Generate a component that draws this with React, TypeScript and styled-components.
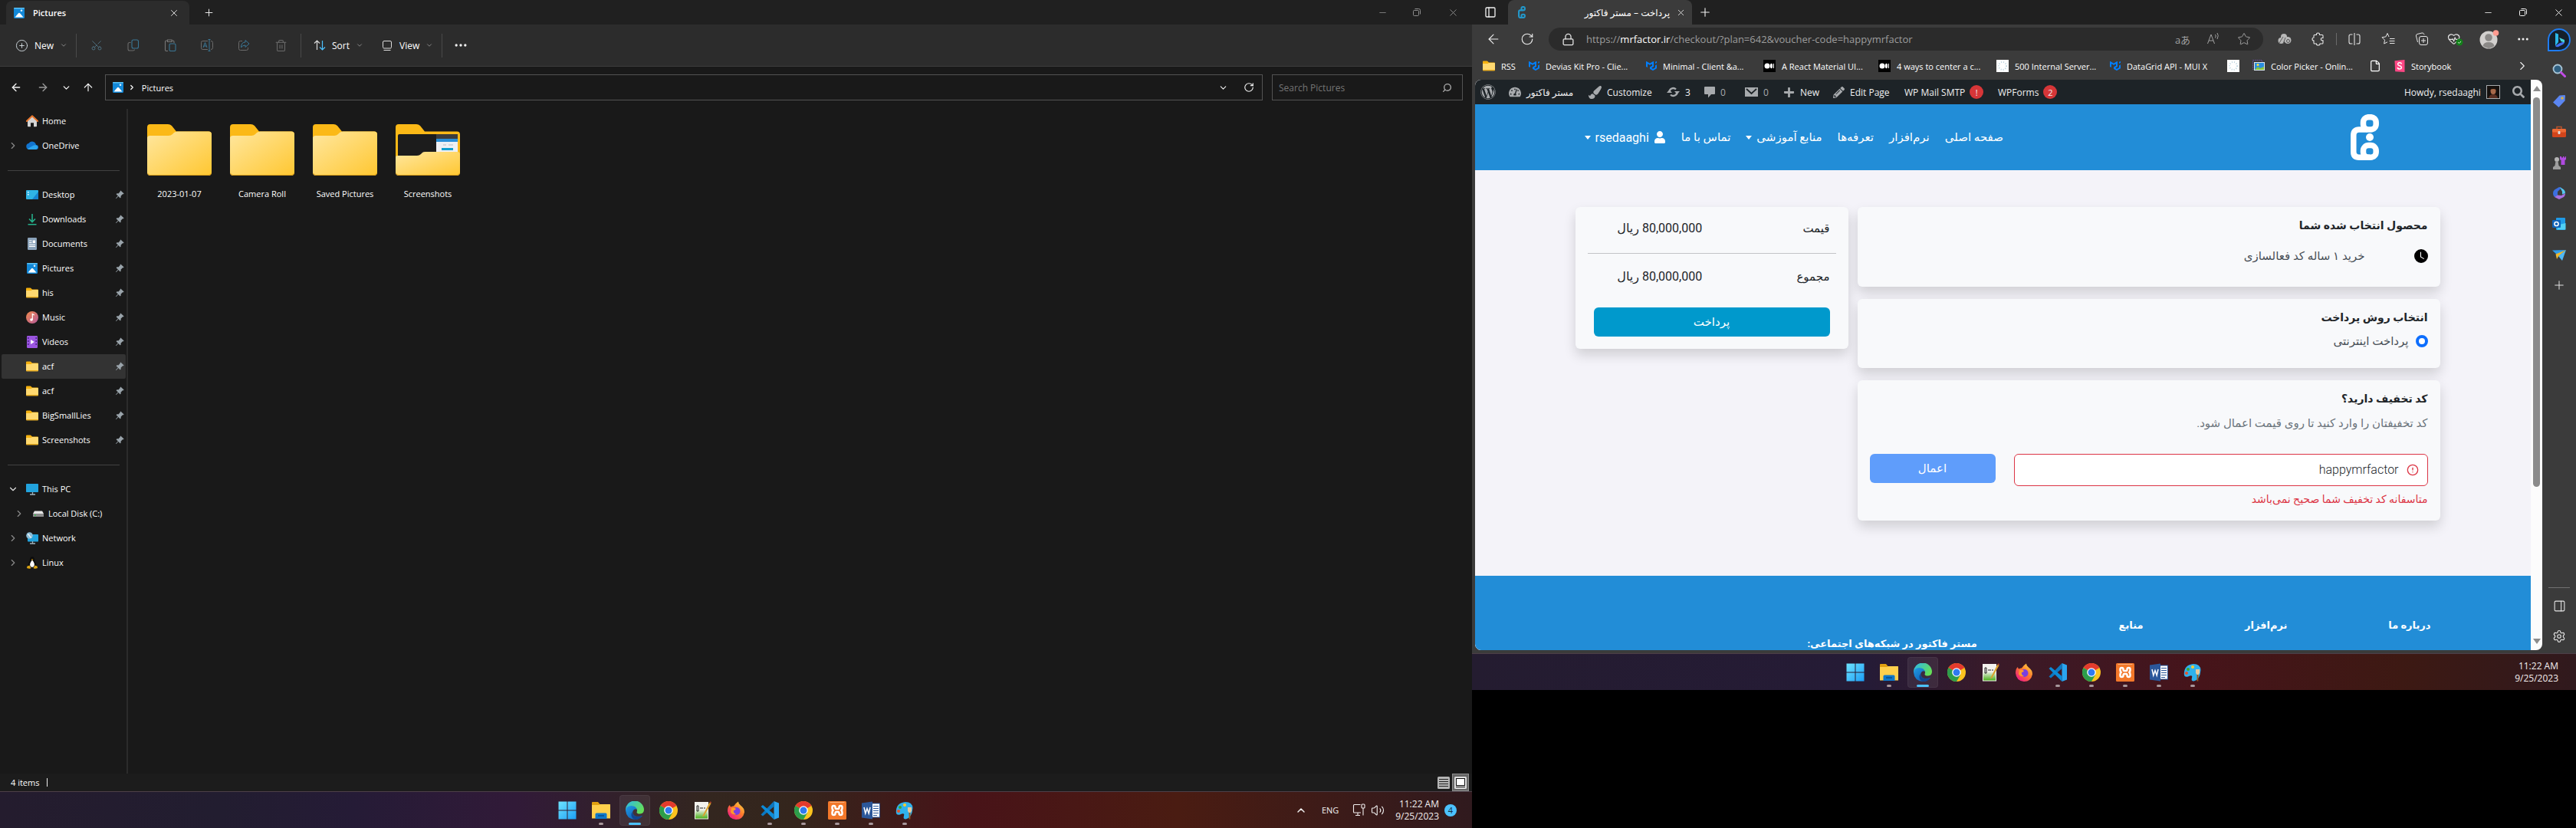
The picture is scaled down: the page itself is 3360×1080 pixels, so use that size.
import React from 'react';
import styled, { createGlobalStyle, css } from 'styled-components';
import {
  ArrowLeft, ArrowRight, ArrowUp, ChevronDown, ChevronRight, ChevronUp, Ellipsis, File,
  Minus, PanelRight, Plus, RotateCw, Scissors, Search, Settings, Star, Trash2, Volume2, X, Lock,
  CircleAlert, HeartPulse, PanelLeft, CirclePlus,
} from 'lucide-react';
import { BsPinAngleFill, BsClockFill } from 'react-icons/bs';
import { FaWordpress, FaPaintBrush, FaTachometerAlt, FaPlus, FaPencilAlt, FaUser, FaSearch } from 'react-icons/fa';
import { SiMui } from 'react-icons/si';

const uiFont = '"Open Sans", "Noto Sans", "DejaVu Sans", "Noto Sans CJK JP", sans-serif';
const siteFont = 'Roboto, "DejaVu Sans", sans-serif';

const GlobalStyle = createGlobalStyle`
  *, *::before, *::after { box-sizing: border-box; }
  body { margin: 0; background: #000; font-family: ${uiFont}; font-size: 11px; color: #fff; }
  button, input { font: inherit; color: inherit; }
  button { background: none; border: 0; padding: 0; margin: 0; }
  a { color: inherit; text-decoration: none; }
  ul { list-style: none; margin: 0; padding: 0; }
  h2, h3, p { margin: 0; }
  svg { flex: none; display: block; }
`;

/* ---------- artwork ---------- */

const PicturesIcon = ({ size = 16 }: { size?: number }) => (
  <svg width={size} height={size} viewBox="0 0 16 16">
    <rect x="1" y="1" width="14" height="14" rx="1.5" fill="#1288d8" />
    <rect x="1" y="1" width="14" height="1.5" rx=".7" fill="#5cc3f5" />
    <path d="M2.5 13.5 7 8.2q1-1 2 0l4.500 5.300z" fill="#fff" />
    <circle cx="11" cy="4.800" r="1.300" fill="#d8f1ff" />
  </svg>
);

const SmallFolder = ({ size = 16 }: { size?: number }) => (
  <svg width={size} height={size} viewBox="0 0 16 16">
    <path d="M0 2.500q0-1 1-1h4.500q.6 0 1 .5L8 3.500h7q1 0 1 1V8H0z" fill="#f5b10f" />
    <path d="M0 5h6.500l1.500-1h7q1 0 1 1v8.500q0 .8-.8.8H.8q-.8 0-.8-.8z" fill="#ffd970" />
    <path d="M0 13h16v.5q0 .8-.8.8H.8q-.8 0-.8-.8z" fill="#e8a917" />
  </svg>
);

const HomeIcon = () => (
  <svg width="16" height="16" viewBox="0 0 16 16">
    <path d="M2 7 8 1.500 14 7v7.500q0 .8-.8.8H10v-5H6v5H2.800q-.8 0-.8-.8z" fill="#d4d4d4" />
    <path d="M.8 8 8 1.200 15.200 8" fill="none" stroke="#e8762c" strokeWidth="2" strokeLinecap="round" strokeLinejoin="round" />
  </svg>
);

const OneDriveIcon = () => (
  <svg width="16" height="16" viewBox="0 0 16 16">
    <path d="M4 13a4 4 0 0 1-.6-7.900A5.200 5.200 0 0 1 13 7a3 3 0 0 1 0 6z" fill="#1274cf" />
    <path d="M2 12 10 7.500q3-1 4.500.8A3 3 0 0 1 13 13H4q-1.200 0-2-1z" fill="#2ba5ee" />
  </svg>
);

const DesktopIcon = () => (
  <svg width="16" height="16" viewBox="0 0 16 16">
    <rect x="0" y="2" width="16" height="12" rx="1" fill="#2fb3e4" />
    <path d="M8 14 16 4v9q0 1-1 1z" fill="#1583cf" />
    <path d="M2 4h1.500v1.500H2zM2 7h1.500v1.500H2z" fill="#fff" />
  </svg>
);

const DownloadIcon = () => (
  <svg width="16" height="16" viewBox="0 0 16 16" fill="none" stroke="#25b08b" strokeWidth="1.600">
    <path d="M8 1v10M4 7.500 8 11.500l4-4M2.500 14.700h11" />
  </svg>
);

const DocumentIcon = () => (
  <svg width="16" height="16" viewBox="0 0 16 16">
    <rect x="2" y="0" width="12" height="16" rx="1.200" fill="#8ba3ba" />
    <path d="M4 4h3.500M4 6.500h3.500M4 9h8M4 11.300h8" stroke="#fff" strokeWidth="1.200" />
    <rect x="8.700" y="3.500" width="3.300" height="3.500" fill="#fff" />
  </svg>
);

const MusicIcon = () => (
  <svg width="16" height="16" viewBox="0 0 16 16">
    <defs>
      <linearGradient id="music" x1="0" y1="0" x2="1" y2="1"><stop stopColor="#f08a4c" /><stop offset="1" stopColor="#b65a9b" /></linearGradient>
    </defs>
    <circle cx="8" cy="8" r="8" fill="url(#music)" />
    <circle cx="7" cy="11" r="1.800" fill="#fff" />
    <path d="M8.300 11V3.500l2.500 1.500" fill="none" stroke="#fff" strokeWidth="1.200" />
  </svg>
);

const VideoIcon = () => (
  <svg width="16" height="16" viewBox="0 0 16 16">
    <rect x="1" y="0" width="14" height="16" rx="1.200" fill="#9b55e0" />
    <path d="M2.800 2v12M13.200 2v12" stroke="#4a2384" strokeWidth="1.500" strokeDasharray="2 2" />
    <path d="M6 5v6l4.800-3z" fill="#fff" />
  </svg>
);

const ComputerIcon = ({ globe }: { globe?: boolean }) => (
  <svg width="16" height="16" viewBox="0 0 16 16">
    <rect x={globe ? 2 : 0} y={globe ? 3 : 1} width={globe ? 14 : 16} height={globe ? 9.500 : 11} rx=".8" fill="#22a3dd" />
    <path d="M8.500 12v2.500M5 15h7" stroke="#9fb2bd" strokeWidth="1.300" />
    {globe && <circle cx="4.500" cy="4.500" r="4.300" fill="#8cbcd6" />}
    {globe && <path d="M2 3q2 0 2.500 2T7 7" stroke="#e8f5fb" strokeWidth="1.300" fill="none" />}
  </svg>
);

const DiskIcon = () => (
  <svg width="16" height="16" viewBox="0 0 16 16">
    <path d="M3 4.500h10L15 8H1z" fill="#e6e6e6" />
    <rect x="1" y="8" width="14" height="4" rx=".6" fill="#8d8d8d" />
    <circle cx="4" cy="10" r=".9" fill="#2fc04a" />
  </svg>
);

const LinuxIcon = () => (
  <svg width="16" height="16" viewBox="0 0 16 16">
    <path d="M8 .2q3 0 3 3.500 0 2 1.800 5 1.200 3 0 5.300H3.200q-1.200-2.300 0-5.300Q5 5.700 5 3.700 5 .2 8 .2z" fill="#0c0c0c" />
    <path d="M8 4.500q2 2 2.800 5 .5 4-2.800 4.300-3.300-.3-2.800-4.300Q6 6.500 8 4.500z" fill="#fff" />
    <path d="M1.500 12.500 4.500 11.500l2 3.500q-1.500 1.300-5.500 0zM14.500 12.500 11.500 11.500l-2 3.500q1.500 1.300 5.500 0zM6.700 3.800 8 3.200l1.300.6L8 5z" fill="#dba413" />
  </svg>
);

const BigFolder = ({ preview }: { preview?: boolean }) => (
  <svg width="84" height="67" viewBox="0 0 84 67">
    <defs>
      <linearGradient id="folder" x1="0" y1="0" x2="1" y2="1"><stop stopColor="#ffe79f" /><stop offset="1" stopColor="#ffc731" /></linearGradient>
    </defs>
    <path d="M0 4q0-4 4-4h23q3 0 5 2l6 7.500h42q4 0 4 4V60H0z" fill="#fbb917" />
    {preview && (
      <g>
        <rect x="3" y="13" width="78" height="32" rx="2" fill="#1c1c1c" />
        <rect x="53" y="13" width="28" height="6" fill="#3c3c3c" />
        <rect x="53" y="19" width="28" height="5" fill="#2a8fd8" />
        <rect x="53" y="23" width="28" height="22" fill="#eef0f4" />
        <path d="M62 27h4M69 27h6" stroke="#b9bcc4" />
        <rect x="60" y="31" width="15" height="3" fill="#11a0cf" />
      </g>
    )}
    {preview
      ? <path d="M0 43q0-2 3-2h25q3 0 5-2l2-2q1-1 4-1h41q4 0 4 3v24q0 4-4 4H4q-4 0-4-4z" fill="url(#folder)" />
      : <path d="M0 18q0-3 4-3h24q3 0 5-2l2-2q2-1.500 4-1.500h41q4 0 4 4V63q0 4-4 4H4q-4 0-4-4z" fill="url(#folder)" />}
    <path d="M.5 64q1 2.500 3.500 2.500h76q2.500 0 3.500-2.500" fill="none" stroke="#d99c17" />
  </svg>
);

const CopyIcon = () => (
  <svg width="16" height="16" viewBox="0 0 16 16" fill="none" strokeWidth="1.100">
    <path d="M4.500 4.500H3q-2 0-2 2v6.500q0 2 2 2h4.500q2 0 2-1.500" stroke="#6b6b6b" />
    <rect x="6" y="1" width="8.500" height="11" rx="2" stroke="#3a7796" />
  </svg>
);

const PasteIcon = () => (
  <svg width="16" height="16" viewBox="0 0 16 16" fill="none" strokeWidth="1.100">
    <path d="M5 15.500H3q-1.500 0-1.500-1.500V3.500Q1.500 2 3 2h1.500M10 2h1.500Q13 2 13 3.500V5M4.500 1h5.500v2.500H4.500z" stroke="#777" />
    <rect x="7" y="6" width="8" height="9.500" rx="1.500" stroke="#3a7796" />
  </svg>
);

const RenameIcon = () => (
  <svg width="16" height="16" viewBox="0 0 16 16" fill="none" stroke="#6b6b6b">
    <path d="M9 2.500H2.500q-2 0-2 2v7q0 2 2 2H9M13 2.500q2.500 0 2.500 2v7q0 2-2.500 2" />
    <path d="M3 11l2.500-6.500L8 11M4 9h3.200M11 .5v15M9.500.5h3M9.500 15.500h3" stroke="#3a7796" />
  </svg>
);

const ShareIcon = () => (
  <svg width="16" height="16" viewBox="0 0 16 16" fill="none" stroke="#6b6b6b">
    <path d="M6 2.500H3.500q-2 0-2 2v8q0 2 2 2h8q2 0 2-2V11" />
    <path d="M10 1.500 15 6l-5 4.500V8q-4 0-5.500 3Q4.500 4 10 4z" stroke="#3a7796" />
  </svg>
);

const SortIcon = () => (
  <svg width="16" height="16" viewBox="0 0 16 16" fill="none">
    <path d="M4.500 14V2M1 5.500 4.500 2 8 5.500" stroke="#dcdcdc" strokeWidth="1.200" />
    <path d="M11.500 2v12M8 10.500l3.500 3.500 3.500-3.500" stroke="#4cc2ff" strokeWidth="1.200" />
  </svg>
);

const ViewIcon = () => (
  <svg width="16" height="16" viewBox="0 0 16 16" fill="none" stroke="#dcdcdc">
    <rect x="2.500" y="2.500" width="11" height="9.500" rx="1.500" />
    <path d="M3.500 14.500h9" />
  </svg>
);

const RestoreIcon = () => (
  <svg width="12" height="12" viewBox="0 0 12 12" fill="none" stroke="currentColor">
    <rect x="1.500" y="3.500" width="7" height="7" rx="1" />
    <path d="M3.500 1.500h5q2 0 2 2v5" />
  </svg>
);

const WiredNetworkIcon = () => (
  <svg width="17" height="17" viewBox="0 0 17 17" fill="none" stroke="#f2eeee" strokeWidth="1.100">
    <path d="M10.500 1.500H2.500q-1 0-1 1v8.500q0 1 1 1h8.500M4 15.500h6M7 12v3.500M14 6v9.500" />
    <rect x="12" y="1" width="4" height="5" rx="1" />
  </svg>
);

const WindowsLogo = () => (
  <svg width="24" height="24" viewBox="0 0 24 24">
    <defs>
      <linearGradient id="win" x1="0" y1="0" x2="1" y2="1"><stop stopColor="#6fe4ff" /><stop offset="1" stopColor="#1b9df5" /></linearGradient>
    </defs>
    <path d="M.5.500h11v11H.5zM12.500.500h11v11h-11zM.5 12.500h11v11H.5zM12.500 12.500h11v11h-11z" fill="url(#win)" />
  </svg>
);

const ExplorerLogo = () => (
  <svg width="24" height="24" viewBox="0 0 24 24">
    <path d="M0 2q0-1 1-1h7l2.500 3H23q1 0 1 1v3H0z" fill="#e0a010" />
    <path d="M0 5h9l2-1h12q1 0 1 1v17.500H0z" fill="#ffd04c" />
    <path d="M4.500 23v-6q0-1.500 1.500-1.500h12q1.500 0 1.500 1.500v6z" fill="#0f78c8" />
    <path d="M8 19h8" stroke="#084d8c" strokeWidth="1.500" />
  </svg>
);

const EdgeLogo = () => (
  <svg width="24" height="24" viewBox="0 0 24 24">
    <defs>
      <linearGradient id="edgeTop" x1="0" y1="0" x2="1" y2=".6"><stop stopColor="#2bb7ef" /><stop offset="1" stopColor="#65e056" /></linearGradient>
      <linearGradient id="edgeSide" x1="0" y1="0" x2="1" y2="1"><stop stopColor="#1f9be6" /><stop offset="1" stopColor="#0c4fa8" /></linearGradient>
    </defs>
    <path d="M0 12A12 12 0 0 1 24 11q0 5-5 5.500-4 .3-4.500-2 2-5-3.500-6.500T0 12z" fill="url(#edgeTop)" />
    <path d="M0 12q1-6 7.500-6 6 .2 7.500 5-3-2-5 1t1 6.500q4 3 11 .2Q18.500 24 12 24 1 23 0 12z" fill="url(#edgeSide)" />
    <path d="M9 14q0 5 5 6t8-1.300Q18.500 24 12 24q-5-2-4.500-7 .5-2 1.500-3z" fill="#12458f" />
  </svg>
);

const ChromeLogo = () => (
  <svg width="24" height="24" viewBox="0 0 24 24">
    <circle cx="12" cy="12" r="12" fill="#fcc31e" />
    <path d="M12 12 1.600 6A12 12 0 0 1 22.400 6z" fill="#e33b2e" />
    <path d="M1.600 6 12 12l0 12A12 12 0 0 1 1.600 6z" fill="#2c9e4b" />
    <path d="M12 24l5.200-9L12 12l-5.200 3z" fill="#2c9e4b" />
    <circle cx="12" cy="12" r="5.800" fill="#fff" />
    <circle cx="12" cy="12" r="4.500" fill="#2f7af0" />
  </svg>
);

const NotepadLogo = () => (
  <svg width="24" height="24" viewBox="0 0 24 24">
    <defs>
      <linearGradient id="npp" x1="0" y1="0" x2="0" y2="1"><stop offset=".4" stopColor="#f3f3ee" /><stop offset="1" stopColor="#4bb01c" /></linearGradient>
    </defs>
    <rect x="2" y="1" width="18" height="22.500" fill="#f3f3ee" />
    <path d="M3 3h16v19.500H3z" fill="url(#npp)" />
    <path d="M5 6v7h2V6zM9 9h4M14 9h2" stroke="#222" fill="none" />
    <path d="M21.500 1.500 13 18l-1 2.500 2.500-1.500L23.500 3z" fill="#dba12c" />
    <path d="m21.500 1.500 1-1.200 1.500 1-.5 1.700z" fill="#a33a2a" />
  </svg>
);

const FirefoxLogo = () => (
  <svg width="24" height="24" viewBox="0 0 24 24">
    <defs>
      <linearGradient id="fox" x1="1" y1="0" x2=".2" y2="1"><stop stopColor="#ffe94a" /><stop offset=".5" stopColor="#ff7a2c" /><stop offset="1" stopColor="#f0148c" /></linearGradient>
    </defs>
    <path d="M1 13q0-6 3-8 0 2 1.500 2.500Q8 6 9 6.500 11 3 15 .5q0 3 3 5 5 3.500 5 9Q21 24 12 24 2 23 1 13z" fill="url(#fox)" />
    <circle cx="12.500" cy="13" r="5" fill="#7a3fe0" />
    <path d="M6 9q4-1 6 1-1 2-3 2-1 3 3 5-5 1-7-3z" fill="#ff9a2a" />
  </svg>
);

const CodeLogo = () => (
  <svg width="24" height="24" viewBox="0 0 24 24">
    <path d="M17.500 0 24 2.500v19L17.500 24z" fill="#2aa5ef" />
    <path d="M17.500 0v7L3 19.500.5 17.500z" fill="#0b78c2" />
    <path d="M17.500 24v-7L3 5 .5 7z" fill="#0c8bd8" />
  </svg>
);

const XamppLogo = () => (
  <svg width="24" height="24" viewBox="0 0 24 24" fill="none" strokeLinecap="round" strokeLinejoin="round">
    <rect width="24" height="24" rx="1.500" fill="#f3782a" />
    <path d="M3 1.500h18" stroke="#f9b07c" />
    <path d="M7.500 8v1.500q0 1 1 1.500l1 1-1 1q-1 .5-1 1.500V16M16.500 8v1.500q0 1-1 1.500l-1 1 1 1q1 .5 1 1.500V16M8 12h8" stroke="#fff" strokeWidth="6.500" />
    <path d="M7.500 8v1q0 1.500 2 3-2 1.500-2 3v1M16.500 8v1q0 1.500-2 3 2 1.500 2 3v1M10 12h4" stroke="#f3782a" strokeWidth="1.600" />
  </svg>
);

const WordLogo = () => (
  <svg width="24" height="24" viewBox="0 0 24 24">
    <rect x="11" y="3" width="12.500" height="18" fill="#fff" stroke="#2b579a" />
    <path d="M15 6.500h7M15 9.500h7M15 12.500h7M15 15.500h7M15 18.500h5" stroke="#2b579a" />
    <path d="M0 2.500 14 .5v23L0 21.500z" fill="#2b579a" />
    <path d="m3 8 1.800 8L7 9.500 9.200 16 11 8" fill="none" stroke="#fff" strokeWidth="1.500" />
  </svg>
);

const PaintLogo = () => (
  <svg width="24" height="24" viewBox="0 0 24 24">
    <path d="M13 1q9 0 9.500 8-1 13-9 14.500-4 0-2.500-4.500T6 17.500Q1 19 .8 14 1 2 13 1z" fill="#2fb1ec" />
    <circle cx="6" cy="8" r="2" fill="#3fa52f" /><circle cx="12" cy="5" r="2" fill="#ffcc2e" /><circle cx="4" cy="13" r="2" fill="#e8532a" />
    <path d="M16 8h5v5l-1.500 2h-2L16 13z" fill="#e8c89a" />
    <path d="M17.500 15h2l-.2 8.500h-1.600z" fill="#9a5b1e" />
  </svg>
);

const SiteLogo = () => (
  <svg width="37" height="60" viewBox="0 0 37 60" fill="none" stroke="#fff" strokeWidth="7.500">
    <rect x="16.500" y="3.700" width="16.700" height="16.300" rx="7" />
    <path d="M22 20H11q-7.200 0-7.200 7.500V49q0 7.200 7.200 7.200h14" />
    <rect x="16.500" y="40.500" width="16.700" height="15.700" rx="7" />
    <circle cx="25" cy="30" r="5" fill="#fff" stroke="none" />
  </svg>
);

const SiteFavicon = () => (
  <svg width="10" height="16" viewBox="0 0 37 60" fill="none" stroke="#2397c9" strokeWidth="8">
    <rect x="16.500" y="3.700" width="16.700" height="16.300" rx="7" />
    <path d="M22 20H11q-7.200 0-7.200 7.500V49q0 7.200 7.200 7.200h14" />
    <rect x="16.500" y="40.500" width="16.700" height="15.700" rx="7" />
  </svg>
);

const MediumIcon = () => (
  <svg width="16" height="16" viewBox="0 0 16 16">
    <rect width="16" height="16" fill="#000" />
    <circle cx="5" cy="8" r="3.500" fill="#fff" /><ellipse cx="10.500" cy="8" rx="1.600" ry="3.300" fill="#fff" /><path d="M13.500 5v6" stroke="#fff" />
  </svg>
);

const BlankSiteIcon = () => (
  <svg width="16" height="16" viewBox="0 0 16 16">
    <rect width="16" height="16" fill="#fff" />
    <circle cx="8" cy="8" r="5" fill="none" stroke="#b9d3de" strokeWidth="2" strokeDasharray="1 2" />
  </svg>
);

const PickerIcon = () => (
  <svg width="16" height="16" viewBox="0 0 16 16">
    <rect x=".5" y=".5" width="12" height="12" fill="none" stroke="#6b4fa8" strokeDasharray="1.500 1" />
    <rect x="2" y="3" width="14" height="11" fill="#d9e6ee" /><rect x="3" y="4" width="12" height="9" fill="#2a8de0" />
    <path d="m3 13 4-4 3 2 5-2v4z" fill="#8ac43f" /><circle cx="7" cy="6.500" r="1.500" fill="#ffdf3d" />
  </svg>
);

const StorybookIcon = () => (
  <svg width="14" height="16" viewBox="0 0 14 16">
    <path d="M.5 1.200 13.500 0v16L1.200 15.300z" fill="#ff4785" />
    <path d="M9.500 5.500q-.5-2-2.800-1.800T4.700 6q.2 1.300 2.300 1.800T9.400 10q-.2 2-2.500 2t-2.700-2" fill="none" stroke="#fff" strokeWidth="1.500" />
  </svg>
);

const BingIcon = () => (
  <svg width="32" height="32" viewBox="0 0 32 32">
    <path d="M2 30V16A14 14 0 1 1 16 30z" fill="#15202b" stroke="#1f7cf0" strokeWidth="2" />
    <path d="M11 7l4 1.500V19l-4 5z" fill="#2ab7e8" />
    <path d="m11 24 5-3.500 7-2.500q0 3-3 4.500L15 25q-2.500 1-4-1z" fill="#3f6ff0" />
    <path d="m16 13 7 3v3.500L18.500 18z" fill="#45d3d8" />
  </svg>
);

const TagIcon = () => (
  <svg width="18" height="18" viewBox="0 0 18 18">
    <path d="M9.500 1.500 16 1q1 0 1 1l-.5 6.500-8 8.500-7.500-6.500z" fill="#5b86f2" /><circle cx="13" cy="5" r="1.800" fill="#d9b23c" />
  </svg>
);

const ToolboxIcon = () => (
  <svg width="18" height="18" viewBox="0 0 18 18">
    <path d="M6 5V2.500h6V5" fill="none" stroke="#b9532c" strokeWidth="1.500" />
    <rect y="5" width="18" height="11" rx="1.500" fill="#d1451c" /><rect y="5" width="18" height="4.500" rx="1.500" fill="#ee6a35" /><rect x="7.500" y="8" width="3" height="4" rx="1" fill="#ddd" />
  </svg>
);

const GamesIcon = () => (
  <svg width="18" height="18" viewBox="0 0 18 18">
    <path d="M10 1h2v1.500h2V1h1.500v1.500H17V1h1v4l-1.500 1v6h-5V6L10 5z" fill="#b04be0" />
    <circle cx="6" cy="5" r="3" fill="#b5b5b5" /><path d="M4.500 7h3l1 6 2.500 2v3H1v-3l2.500-2z" fill="#9d9d9d" />
  </svg>
);

const OfficeIcon = () => (
  <svg width="18" height="18" viewBox="0 0 18 18">
    <path d="M9 1 3 4.500Q1 6 1 9t2 5l4-2V7l5-5z" fill="#3c6fe0" /><path d="m10 1 5 3.200q2 1.500 2 4.800l-4 1.500V7z" fill="#54c8f0" /><path d="m3 14 4-2.500 5 .5 5-3q0 3.500-2 5l-6 3z" fill="#a76fe0" />
  </svg>
);

const OutlookIcon = () => (
  <svg width="18" height="18" viewBox="0 0 18 18">
    <rect x="5" y="1" width="12" height="16" rx="1" fill="#1f9ae6" /><path d="m9 10 8.500-2v8.500H6z" fill="#50d0f5" />
    <rect x="0" y="4" width="11" height="10" rx="1" fill="#0f62b8" /><circle cx="5.500" cy="9" r="2.600" fill="none" stroke="#fff" strokeWidth="1.500" />
  </svg>
);

const SendIcon = () => (
  <svg width="18" height="18" viewBox="0 0 18 18">
    <path d="M0 3.500 18 3 6 9z" fill="#2f9bea" /><path d="M4.500 8.500 18 3 8 11.500l-2 3.500z" fill="#f0b82e" /><path d="M8 11 18 3l-5 14z" fill="#4fb8f5" />
  </svg>
);

const MagnifierIcon = () => (
  <svg width="18" height="18" viewBox="0 0 18 18">
    <circle cx="7" cy="7" r="5.500" fill="#2f5f80" stroke="#a9c5d6" strokeWidth="1.800" /><path d="m11.500 11.500 5 5" stroke="#c14be6" strokeWidth="3" strokeLinecap="round" />
  </svg>
);

const PuzzleIcon = () => (
  <svg width="18" height="18" viewBox="0 0 18 18" fill="none" stroke="#e6e6e6" strokeWidth="1.100">
    <path d="M4 3.500h2.500q-.3-2.500 2-2.500t2 2.500H14q1 0 1 1v3q-2.700-.4-2.700 1.600T15 10.800V14q0 1-1 1h-3q.2 2-2.300 2t-2.200-2H4q-1 0-1-1v-3Q1 11 1 9t2-2V4.500q0-1 1-1z" />
  </svg>
);

const SplitIcon = () => (
  <svg width="18" height="18" viewBox="0 0 18 18" fill="none" stroke="#e6e6e6" strokeWidth="1.100">
    <path d="M9 1v16M6.500 3H4Q2 3 2 5v8q0 2 2 2h2.500M11.500 3H14q2 0 2 2v8q0 2-2 2h-2.500" />
  </svg>
);

const FavoritesIcon = () => (
  <svg width="18" height="18" viewBox="0 0 18 18" fill="none" stroke="#e6e6e6">
    <path d="M10 6 8 1.500 5.800 6 1 6.700l3.500 3.500L3.700 15 8 12.800M11 8.500h6.500M10.500 11.500h7M11 14.500h6.500" />
  </svg>
);

const CollectionsIcon = () => (
  <svg width="18" height="18" viewBox="0 0 18 18" fill="none" stroke="#e6e6e6">
    <rect x="5.500" y="5.500" width="11" height="11" rx="2.500" /><path d="M11 8v6M8 11h6M3.500 13 1.500 5q-.5-2 1.500-2.500L9 1q2-.5 2.700 1.500l.3.800" />
  </svg>
);

const PerformanceIcon = () => (
  <svg width="22" height="18" viewBox="0 0 22 18">
    <g transform="scale(.72)"><HeartPulse size={24} strokeWidth={1.600} color="#e6e6e6" /></g>
    <circle cx="16" cy="13" r="4.500" fill="#13801a" />
    <path d="m14 13 1.500 1.500L18 12" fill="none" stroke="#cfeccf" />
  </svg>
);

const ReadAloudIcon = () => (
  <svg width="18" height="18" viewBox="0 0 18 18" fill="none" stroke="#a0a0a0">
    <path d="M1.500 15 6 3l4.500 12M3 11h6M11.500 3q1.500 1.500 0 4.500M14 1q2.500 3 0 8" />
  </svg>
);

const ClusterIcon = () => (
  <svg width="18" height="18" viewBox="0 0 18 18" fill="#b8b8b8">
    <circle cx="8" cy="6" r="4" /><circle cx="4.500" cy="11" r="4" /><circle cx="13" cy="10.500" r="4.500" /><circle cx="13.500" cy="11.500" r="2" fill="none" stroke="#4a4a4a" /><path d="M2 14l5-8M7 15l3-8" stroke="#5a5a5a" />
  </svg>
);

const ProfileIcon = () => (
  <svg width="26" height="26" viewBox="0 0 26 26">
    <circle cx="12" cy="14" r="11.500" fill="#d2d0ce" /><circle cx="12" cy="11" r="4.800" fill="#8b8987" /><path d="M4.500 22q1-5 7.500-5t7.500 5q-7 6-15 0z" fill="#8b8987" /><circle cx="21.500" cy="5" r="3.800" fill="#ff9b90" />
  </svg>
);

const WpRefreshIcon = () => (
  <svg width="17" height="16" viewBox="0 0 17 16" fill="none" stroke="#a7aaad" strokeWidth="2.400">
    <path d="M3.500 8.500A5 5 0 0 1 12 4.500M13.500 7.500A5 5 0 0 1 5 11.500" /><path d="M0 9h7L3.500 5zM10 7h7l-3.500 4z" fill="#a7aaad" stroke="none" />
  </svg>
);
const WpCommentIcon = () => (
  <svg width="14" height="16" viewBox="0 0 14 16" fill="#a7aaad"><path d="M1 1h12q1 0 1 1v8q0 1-1 1H9l-4 4.500V11H1q-1 0-1-1V2q0-1 1-1z" /></svg>
);
const WpMailIcon = () => (
  <svg width="17" height="16" viewBox="0 0 17 16"><rect y="2" width="17" height="12" fill="#a7aaad" /><path d="m2 4 6.500 6L15 4" fill="none" stroke="#1d2327" strokeWidth="1.800" /></svg>
);
const AvatarPhoto = () => (
  <svg width="18" height="18" viewBox="0 0 18 18">
    <rect x=".5" y=".5" width="17" height="17" fill="#15100e" stroke="#a7aaad" /><path d="M3 17q1-5 6-5t6 5z" fill="#5a2f22" /><ellipse cx="9" cy="7.500" rx="3.500" ry="4.500" fill="#a8694a" /><path d="M5 6q0-4 4-4t4 4q-4-2-8 0z" fill="#1a120e" />
  </svg>
);

/* ---------- desktop ---------- */

const Desktop = styled.div`
  display: grid;
  grid-template-columns: 4fr 3fr;
  align-items: start;
  min-height: 100vh;
  background: #000;
`;

const Screen = styled.div<{ $ratio: string }>`
  aspect-ratio: ${(p) => p.$ratio};
  display: flex;
  flex-direction: column;
  min-width: 0;
  overflow: hidden;
`;

const IconButton = styled.button<{ $w?: number; $color?: string }>`
  width: ${(p) => p.$w ?? 44}px;
  align-self: stretch;
  flex: none;
  display: grid;
  place-items: center;
  color: ${(p) => p.$color ?? '#f0f0f0'};
`;

const Push = styled.div`flex: 1;`;

/* ---------- file explorer ---------- */

const Explorer = styled.main`
  flex: 1;
  min-height: 0;
  display: flex;
  flex-direction: column;
  background: #191919;
`;

const TitleBar = styled.div`
  display: flex;
  height: 32px;
  padding-left: 8px;
  background: #202020;
`;

const ExplorerTab = styled.div`
  display: flex;
  align-items: center;
  width: 239px;
  margin-top: 1px;
  padding-left: 9px;
  gap: 10px;
  border-radius: 8px 8px 0 0;
  background: #2c2c2c;
  font-weight: 600;
`;

const CommandBar = styled.div`
  display: flex;
  align-items: center;
  height: 55px;
  padding-left: 6px;
  background: #2c2c2c;
  border-bottom: 1px solid #3c3c3c;
`;

const Command = styled.button<{ $w: number }>`
  display: flex;
  align-items: center;
  gap: 8px;
  width: ${(p) => p.$w}px;
  height: 40px;
  padding-left: 14px;
  font-size: 12px;
`;

const Rule = styled.span<{ $h?: number; $m?: number; $color?: string }>`
  width: 1px;
  height: ${(p) => p.$h ?? 31}px;
  margin: 0 ${(p) => p.$m ?? 2}px;
  align-self: center;
  background: ${(p) => p.$color ?? '#4a4a4a'};
`;

const AddressRow = styled.div`
  display: flex;
  align-items: center;
  height: 55px;
  padding: 0 12px 1px 3px;
`;

const AddressBox = styled.div`
  flex: 1;
  display: flex;
  align-items: center;
  height: 34px;
  margin: 0 12px 0 6px;
  padding-left: 8px;
  gap: 5px;
  border: 1px solid #535353;
`;

const SearchBox = styled.label`
  display: flex;
  align-items: center;
  width: 249px;
  height: 34px;
  padding: 0 13px 0 8px;
  border: 1px solid #535353;
  color: #a8a8a8;
  input { flex: 1; min-width: 0; border: 0; padding: 0; background: none; outline: 0; font-size: 12px; }
  input::placeholder { color: #757575; opacity: 1; }
`;

const ExplorerBody = styled.div`
  flex: 1;
  display: flex;
  min-height: 0;
`;

const NavPane = styled.nav`
  width: 167px;
  padding: 0 1px 0 2px;
  border-right: 2px solid #2b2b2b;
`;

const NavItem = styled.a<{ $active?: boolean; $child?: boolean }>`
  display: flex;
  align-items: center;
  height: 32px;
  gap: 5px;
  padding: 0 2px 1px ${(p) => (p.$child ? 16 : 8)}px;
  background: ${(p) => (p.$active ? '#333' : 'transparent')};
  border-radius: 2px;
  white-space: nowrap;
`;

const Expander = styled.span`
  width: 19px;
  flex: none;
  color: #8a8a8a;
`;

const PaneRule = styled.hr`
  height: 1px;
  margin: 16px 8px 15px;
  border: 0;
  background: #414141;
`;

const FolderGrid = styled.section`
  display: flex;
  flex-wrap: wrap;
  align-content: flex-start;
  padding: 20px 13px;
`;

const FolderTile = styled.a`
  width: 108px;
  display: flex;
  flex-direction: column;
  align-items: center;
  gap: 15px;
  line-height: 18px;
`;

const StatusBar = styled.footer`
  display: flex;
  align-items: center;
  height: 23px;
  padding: 0 4px 0 14px;
  gap: 10px;
  background: #1c1c1c;
`;

const ViewToggle = styled.button<{ $on?: boolean }>`
  display: grid;
  place-items: center;
  width: ${(p) => (p.$on ? 22 : 16)}px;
  height: 23px;
  margin-left: -7px;
  ${(p) => p.$on && css`background: #666; border: 1px solid #909090;`}
`;

type NavEntry = { label: string; icon: React.ReactNode; pinned?: boolean; active?: boolean; child?: boolean; open?: 'yes' | 'no' };

const homeEntries: NavEntry[] = [
  { label: 'Home', icon: <HomeIcon /> },
  { label: 'OneDrive', icon: <OneDriveIcon />, open: 'no' },
];
const pinnedEntries: NavEntry[] = [
  { label: 'Desktop', icon: <DesktopIcon /> },
  { label: 'Downloads', icon: <DownloadIcon /> },
  { label: 'Documents', icon: <DocumentIcon /> },
  { label: 'Pictures', icon: <PicturesIcon /> },
  { label: 'his', icon: <SmallFolder /> },
  { label: 'Music', icon: <MusicIcon /> },
  { label: 'Videos', icon: <VideoIcon /> },
  { label: 'acf', icon: <SmallFolder />, active: true },
  { label: 'acf', icon: <SmallFolder /> },
  { label: 'BigSmallLies', icon: <SmallFolder /> },
  { label: 'Screenshots', icon: <SmallFolder /> },
].map((e) => ({ ...e, pinned: true }));
const deviceEntries: NavEntry[] = [
  { label: 'This PC', icon: <ComputerIcon />, open: 'yes' },
  { label: 'Local Disk (C:)', icon: <DiskIcon />, open: 'no', child: true },
  { label: 'Network', icon: <ComputerIcon globe />, open: 'no' },
  { label: 'Linux', icon: <LinuxIcon />, open: 'no' },
];

const NavList = ({ entries }: { entries: NavEntry[] }) => (
  <ul>
    {entries.map((e, i) => (
      <li key={i}>
        <NavItem href="#" $active={e.active} $child={e.child}>
          <Expander>
            {e.open === 'no' && <ChevronRight size={14} />}
            {e.open === 'yes' && <ChevronDown size={14} color="#e0e0e0" />}
          </Expander>
          {e.icon}
          <span>{e.label}</span>
          <Push />
          {e.pinned && <BsPinAngleFill size={12} color="#9aa4ab" />}
        </NavItem>
      </li>
    ))}
  </ul>
);

const ExplorerWindow = () => (
  <Explorer>
    <TitleBar>
      <ExplorerTab>
        <PicturesIcon />
        <span>Pictures</span>
        <Push />
        <IconButton $w={41} aria-label="Close tab"><X size={14} strokeWidth={1.500} /></IconButton>
      </ExplorerTab>
      <IconButton $w={50} aria-label="New tab"><Plus size={15} strokeWidth={1.500} /></IconButton>
      <Push />
      <IconButton $w={46} $color="#8c8c8c" aria-label="Minimize"><Minus size={13} strokeWidth={1.500} /></IconButton>
      <IconButton $w={44} $color="#8c8c8c" aria-label="Restore"><RestoreIcon /></IconButton>
      <IconButton $w={50} $color="#8c8c8c" aria-label="Close"><X size={15} strokeWidth={1.500} /></IconButton>
    </TitleBar>
    <CommandBar>
      <Command $w={91}><CirclePlus size={17} strokeWidth={1.200} color="#dfe9ee" />New<ChevronDown size={10} color="#999" /></Command>
      <Rule />
      <IconButton $w={48} $color="#4d6d7d" aria-label="Cut"><Scissors size={16} strokeWidth={1.500} transform="rotate(-90)" /></IconButton>
      <IconButton $w={48} aria-label="Copy"><CopyIcon /></IconButton>
      <IconButton $w={48} aria-label="Paste"><PasteIcon /></IconButton>
      <IconButton $w={48} aria-label="Rename"><RenameIcon /></IconButton>
      <IconButton $w={48} aria-label="Share"><ShareIcon /></IconButton>
      <IconButton $w={48} $color="#6b6b6b" aria-label="Delete"><Trash2 size={17} strokeWidth={1.500} /></IconButton>
      <Rule />
      <Command $w={88}><SortIcon />Sort<ChevronDown size={10} color="#999" /></Command>
      <Command $w={91}><ViewIcon />View<ChevronDown size={10} color="#999" /></Command>
      <Rule />
      <IconButton aria-label="More"><Ellipsis size={20} /></IconButton>
    </CommandBar>
    <AddressRow>
      <IconButton $w={36} aria-label="Back"><ArrowLeft size={16} strokeWidth={2} /></IconButton>
      <IconButton $w={34} $color="#9a9a9a" aria-label="Forward"><ArrowRight size={16} strokeWidth={2} /></IconButton>
      <IconButton $w={26} aria-label="Recent"><ChevronDown size={13} strokeWidth={2.500} /></IconButton>
      <IconButton $w={32} aria-label="Up"><ArrowUp size={16} strokeWidth={1.800} /></IconButton>
      <AddressBox>
        <PicturesIcon />
        <ChevronRight size={10} strokeWidth={3} />
        <span>&nbsp;Pictures</span>
        <Push />
        <IconButton $w={24} aria-label="History"><ChevronDown size={13} /></IconButton>
        <IconButton $w={34} aria-label="Refresh"><RotateCw size={14} /></IconButton>
      </AddressBox>
      <SearchBox>
        <input placeholder="Search Pictures" aria-label="Search Pictures" />
        <Search size={13} strokeWidth={2.500} transform="scale(-1 1)" />
      </SearchBox>
    </AddressRow>
    <ExplorerBody>
      <NavPane>
        <NavList entries={homeEntries} />
        <PaneRule />
        <NavList entries={pinnedEntries} />
        <PaneRule />
        <NavList entries={deviceEntries} />
      </NavPane>
      <FolderGrid>
        {['2023-01-07', 'Camera Roll', 'Saved Pictures', 'Screenshots'].map((name) => (
          <FolderTile href="#" key={name}><BigFolder preview={name === 'Screenshots'} />{name}</FolderTile>
        ))}
      </FolderGrid>
    </ExplorerBody>
    <StatusBar>
      <span>4 items</span>
      <Rule $h={11} $m={0} $color="#f0f0f0" />
      <Push />
      <ViewToggle aria-label="Details view">
        <svg width="16" height="16" viewBox="0 0 16 16"><rect width="16" height="16" rx="1.500" fill="#b5b5b5" /><path d="M2 3.500h12M2 6.500h12M2 9.500h12M2 12.500h12" stroke="#222" /></svg>
      </ViewToggle>
      <ViewToggle $on aria-label="Large icons view">
        <svg width="16" height="16" viewBox="0 0 16 16"><rect width="16" height="16" rx="1.500" fill="#dedede" /><rect x="2.500" y="2.500" width="11" height="9" fill="#fff" stroke="#111" /><path d="M2 13.500h12" stroke="#111" /></svg>
      </ViewToggle>
    </StatusBar>
  </Explorer>
);

/* ---------- taskbar ---------- */

const Bar = styled.footer<{ $bg: string }>`
  height: 48px;
  flex: none;
  display: grid;
  grid-template-columns: 1fr auto 1fr;
  align-items: center;
  border-top: 1px solid #4d3f48;
  background: ${(p) => p.$bg};
`;

const AppRow = styled.div`
  grid-column: 2;
  display: flex;
  align-items: center;
`;

const AppButton = styled.button<{ $state?: 'open' | 'active' }>`
  width: 40px;
  height: 40px;
  margin: 0 2px;
  padding-top: 8px;
  display: flex;
  flex-direction: column;
  align-items: center;
  gap: 4px;
  border-radius: 4px;
  ${(p) => p.$state === 'active' && css`background: rgba(255, 255, 255, 0.07); box-shadow: inset 0 0 0 1px rgba(255, 255, 255, 0.05);`}
  &::after {
    content: '';
    width: ${(p) => (p.$state === 'active' ? 16 : 6)}px;
    height: 3px;
    border-radius: 2px;
    background: ${(p) => (p.$state === 'active' ? '#4cc2ff' : p.$state === 'open' ? '#a8989c' : 'transparent')};
  }
`;

const Tray = styled.div<{ $end: number }>`
  display: flex;
  justify-content: flex-end;
  align-items: center;
  padding-right: ${(p) => p.$end}px;
  color: #f2eeee;
`;

const Clock = styled.time`
  text-align: right;
  font-size: 12px;
  line-height: 16px;
  margin-left: 14px;
`;

const CountBadge = styled.span`
  display: grid;
  place-items: center;
  width: 16px;
  height: 16px;
  margin-left: 7px;
  border-radius: 50%;
  background: #4cc2ff;
  color: #14303f;
  font-size: 11px;
`;

const apps: { name: string; icon: React.ReactNode; state?: 'open' | 'active' }[] = [
  { name: 'Start', icon: <WindowsLogo /> },
  { name: 'File Explorer', icon: <ExplorerLogo />, state: 'open' },
  { name: 'Edge', icon: <EdgeLogo />, state: 'active' },
  { name: 'Chrome', icon: <ChromeLogo /> },
  { name: 'Notepad++', icon: <NotepadLogo /> },
  { name: 'Firefox', icon: <FirefoxLogo /> },
  { name: 'Code', icon: <CodeLogo />, state: 'open' },
  { name: 'Chrome profile', icon: <ChromeLogo />, state: 'open' },
  { name: 'XAMPP', icon: <XamppLogo />, state: 'open' },
  { name: 'Word', icon: <WordLogo />, state: 'open' },
  { name: 'Paint', icon: <PaintLogo />, state: 'open' },
];

const Taskbar = ({ bg, end, primary }: { bg: string; end: number; primary?: boolean }) => (
  <Bar $bg={bg}>
    <AppRow>
      {apps.map((a) => <AppButton key={a.name} aria-label={a.name} $state={a.state}>{a.icon}</AppButton>)}
    </AppRow>
    <Tray $end={end}>
      {primary && (
        <>
          <IconButton $w={34} aria-label="Hidden icons"><ChevronUp size={16} strokeWidth={2.200} /></IconButton>
          <IconButton $w={42} aria-label="Language">ENG</IconButton>
          <IconButton $w={32} aria-label="Network"><WiredNetworkIcon /></IconButton>
          <IconButton $w={18} aria-label="Volume"><Volume2 size={18} strokeWidth={1.500} /></IconButton>
        </>
      )}
      <Clock>11:22 AM<br />9/25/2023</Clock>
      {primary && <CountBadge>4</CountBadge>}
    </Tray>
  </Bar>
);

/* ---------- browser ---------- */

const Browser = styled.main`
  flex: 1;
  min-height: 0;
  display: flex;
  flex-direction: column;
  background: #3b3b3b;
`;

const TabStrip = styled.div`
  display: flex;
  height: 32px;
  flex: none;
  background: #202020;
`;

const BrowserTab = styled.div`
  display: flex;
  align-items: center;
  width: 240px;
  padding-left: 13px;
  border-radius: 8px 8px 0 0;
  background: #3b3b3b;
  font-size: 12px;
`;

const BrowserBody = styled.div`
  flex: 1;
  min-height: 0;
  display: flex;
`;

const BrowserMain = styled.div`
  flex: 1;
  min-width: 0;
  display: flex;
  flex-direction: column;
`;

const BrowserToolbar = styled.div`
  display: flex;
  align-items: center;
  height: 38px;
  flex: none;
  padding: 0 3px 0 6px;
`;

const UrlPill = styled.div`
  flex: 1;
  display: flex;
  align-items: center;
  height: 30px;
  margin: 0 6px;
  padding: 0 5px 0 17px;
  border-radius: 15px;
  background: #2b2b2b;
  color: #9d9d9d;
  font-size: 13px;
  b { font-weight: 400; color: #fff; }
  > span { margin-left: 15px; }
`;

const Bookmarks = styled.div`
  display: flex;
  align-items: center;
  height: 34px;
  flex: none;
  padding: 0 5px 2px 14px;
`;

const Bookmark = styled.a<{ $w: number }>`
  display: flex;
  align-items: center;
  gap: 8px;
  width: ${(p) => p.$w}px;
  white-space: nowrap;
`;

const Sidebar = styled.aside`
  width: 44px;
  display: flex;
  flex-direction: column;
  align-items: center;
  padding: 0 0 2px;
`;

const SideButton = styled.button`
  width: 44px;
  height: 40px;
  display: grid;
  place-items: center;
  color: #e6e6e6;
`;

const SideRule = styled.hr`
  width: 28px;
  height: 1px;
  margin: 0 0 3px;
  border: 0;
  background: #707070;
`;

const Viewport = styled.div`
  flex: 1;
  min-height: 0;
  display: flex;
  margin: 0 0 4px 4px;
  border-radius: 8px;
  overflow: hidden;
  background: #fcfcfc;
`;

const Page = styled.div`
  flex: 1;
  min-width: 0;
  display: flex;
  flex-direction: column;
  background: #f4f3f9;
`;

const Scrollbar = styled.div`
  width: 15px;
  display: flex;
  flex-direction: column;
  align-items: center;
  padding: 8px 0;
`;

const Triangle = styled.i<{ $down?: boolean }>`
  border: 5px solid transparent;
  ${(p) => (p.$down ? css`border-top: 7px solid #8b8b8b; border-bottom: 0;` : css`border-bottom: 7px solid #8b8b8b; border-top: 0;`)}
`;

const Thumb = styled.div`
  width: 9px;
  flex: 0 1 508px;
  margin-top: 8px;
  border-radius: 5px;
  background: #8b8b8b;
`;

const AdminBar = styled.div`
  display: flex;
  align-items: center;
  height: 32px;
  flex: none;
  padding: 0 8px 0 7px;
  background: #1d2327;
  color: #f0f0f1;
  font-size: 12px;
`;

const AdminItem = styled.a<{ $w?: number; $dim?: boolean }>`
  display: flex;
  align-items: center;
  gap: 7px;
  width: ${(p) => (p.$w ? `${p.$w}px` : 'auto')};
  white-space: nowrap;
  color: ${(p) => (p.$dim ? '#a7aaad' : 'inherit')};
`;

const AlertDot = styled.span`
  display: grid;
  place-items: center;
  width: 18px;
  height: 18px;
  margin-left: -1px;
  border-radius: 50%;
  background: #d63638;
  font-size: 11px;
`;

const Container = styled.div`
  width: 1140px;
  max-width: 100%;
  margin: 0 auto;
`;

const SiteHeader = styled.header`
  flex: none;
  background: #228dd7;
  font-family: ${siteFont};
`;

const HeaderInner = styled(Container)`
  display: flex;
  align-items: center;
  justify-content: space-between;
  height: 86px;
  padding: 0 80px 0 24px;
  direction: rtl;
`;

const Menu = styled.nav`
  display: flex;
  align-items: center;
  gap: 20px;
  font-size: 15px;
`;

const MenuLink = styled.a`
  display: flex;
  align-items: center;
  gap: 6px;
  white-space: nowrap;
`;

const Latin = styled.span`font-size: 16px;`;

const Caret = styled.i`
  border: 4px solid transparent;
  border-top: 5px solid #fff;
  border-bottom: 0;
`;

const Checkout = styled(Container)`
  flex: 1 0 auto;
  display: grid;
  grid-template-columns: 2fr 1fr;
  align-items: start;
  padding: 48px 0 72px;
  direction: rtl;
  font-family: ${siteFont};
  font-size: 15px;
  line-height: 24px;
  color: #212529;
`;

const Stack = styled.div`
  display: grid;
  gap: 16px;
`;

const Card = styled.section<{ $h?: number }>`
  min-height: ${(p) => p.$h ?? 0}px;
  padding: 12px 16px;
  border-radius: 6px;
  background: #f8f9fb;
  box-shadow: 0 8px 16px rgba(0, 0, 0, 0.15);
`;

const PriceCard = styled(Card)`
  margin: 0 12px;
  padding: 16px 16px;
`;

const PriceRow = styled.div`
  display: grid;
  grid-template-columns: 54fr 46fr;
  padding: 0 8px;
`;

const Amount = styled.span`
  font-size: 16px;
  color: #212529;
`;

const PriceRule = styled.hr`
  height: 1px;
  margin: 20px 0 18px;
  border: 0;
  background: #c2c4c7;
`;

const PrimaryButton = styled.button<{ $bg: string }>`
  width: 100%;
  height: 38px;
  border-radius: 6px;
  background: ${(p) => p.$bg};
  color: #fff;
`;

const PayBox = styled.div`padding: 28px 8px 0;`;

const CardTitle = styled.h2`
  font-size: 14px;
  line-height: 24px;
  font-weight: 700;
`;

const Product = styled.p`
  display: flex;
  align-items: center;
  gap: 64px;
  padding-top: 16px;
  color: #495057;
`;

const PayOption = styled.label`
  display: flex;
  align-items: center;
  gap: 9px;
  padding-top: 7px;
  color: #495057;
`;

const Radio = styled.input`
  appearance: none;
  width: 16px;
  height: 16px;
  margin: 0;
  border: 4px solid #0d6efd;
  border-radius: 50%;
  background: #fff;
`;

const Hint = styled.p`
  margin-top: 8px;
  color: #6c757d;
`;

const VoucherRow = styled.form`
  display: grid;
  grid-template-columns: 540fr 164fr;
  gap: 24px;
  align-items: start;
  margin-top: 28px;
`;

const VoucherField = styled.label`
  display: flex;
  align-items: center;
  height: 42px;
  gap: 10px;
  padding: 0 11px;
  border: 1px solid #dc3545;
  border-radius: 6px;
  background: #fff;
  input { flex: 1; min-width: 0; border: 0; padding: 0; outline: 0; background: none; font-size: 16px; font-weight: 300; color: #212529; }
`;

const ErrorText = styled.p`
  margin-top: 5px;
  font-size: 14px;
  color: #dc3545;
`;

const SiteFooter = styled.footer`
  flex: none;
  height: 97px;
  background: #228dd7;
  font-family: ${siteFont};
`;

const FooterInner = styled(Container)`
  display: grid;
  grid-template-columns: 189fr 190fr 219fr 542fr;
  padding: 53px 12px 0 0;
  direction: rtl;
  font-size: 13px;
  line-height: 24px;
  h3 { font-size: inherit; white-space: nowrap; }
`;

const SocialTitle = styled.h3`padding-top: 24px;`;

const mui = <SiMui size={14} color="#007fff" />;
const bookmarks: { w: number; icon: React.ReactNode; label?: string }[] = [
  { w: 60, icon: <SmallFolder />, label: 'RSS' },
  { w: 153, icon: mui, label: 'Devias Kit Pro - Clie...' },
  { w: 153, icon: mui, label: 'Minimal - Client &a...' },
  { w: 150, icon: <MediumIcon />, label: 'A React Material UI...' },
  { w: 154, icon: <MediumIcon />, label: '4 ways to center a c...' },
  { w: 148, icon: <BlankSiteIcon />, label: '500 Internal Server...' },
  { w: 153, icon: mui, label: 'DataGrid API - MUI X' },
  { w: 33, icon: <BlankSiteIcon /> },
  { w: 152, icon: <PickerIcon />, label: 'Color Picker - Onlin...' },
  { w: 33, icon: <File size={16} strokeWidth={1.800} /> },
  { w: 90, icon: <StorybookIcon />, label: 'Storybook' },
];

const BrowserWindow = () => (
  <Browser>
    <TabStrip>
      <IconButton $w={47} aria-label="Tab actions"><PanelLeft size={16} strokeWidth={2} /></IconButton>
      <BrowserTab>
        <SiteFavicon />
        <Push />
        <span dir="rtl">پرداخت – مستر فاکتور</span>
        <IconButton $w={29} aria-label="Close tab"><X size={13} strokeWidth={1.500} /></IconButton>
      </BrowserTab>
      <IconButton $w={34} aria-label="New tab"><Plus size={18} strokeWidth={1.500} /></IconButton>
      <Push />
      <IconButton $w={46} aria-label="Minimize"><Minus size={13} strokeWidth={1.500} /></IconButton>
      <IconButton $w={46} aria-label="Restore"><RestoreIcon /></IconButton>
      <IconButton $w={46} aria-label="Close"><X size={15} strokeWidth={1.500} /></IconButton>
    </TabStrip>
    <BrowserBody>
      <BrowserMain>
        <BrowserToolbar>
          <IconButton aria-label="Back"><ArrowLeft size={20} strokeWidth={1.300} /></IconButton>
          <IconButton aria-label="Refresh"><RotateCw size={18} strokeWidth={1.500} /></IconButton>
          <UrlPill>
            <Lock size={17} strokeWidth={1.800} color="#e6e6e6" />
            <span>https://<b>mrfactor.ir</b>/checkout/?plan=642&amp;voucher-code=happymrfactor</span>
            <Push />
            <IconButton $w={40} $color="#a0a0a0" aria-label="Translate">aあ</IconButton>
            <IconButton $w={40} aria-label="Read aloud"><ReadAloudIcon /></IconButton>
            <IconButton $w={40} $color="#a0a0a0" aria-label="Add to favorites"><Star size={18} strokeWidth={1.300} /></IconButton>
          </UrlPill>
          <IconButton aria-label="Extension"><ClusterIcon /></IconButton>
          <IconButton aria-label="Extensions"><PuzzleIcon /></IconButton>
          <Rule $h={16} $m={1} $color="#6a6a6a" />
          <IconButton aria-label="Split screen"><SplitIcon /></IconButton>
          <IconButton aria-label="Favorites"><FavoritesIcon /></IconButton>
          <IconButton aria-label="Collections"><CollectionsIcon /></IconButton>
          <IconButton aria-label="Performance"><PerformanceIcon /></IconButton>
          <IconButton aria-label="Profile"><ProfileIcon /></IconButton>
          <IconButton aria-label="Menu"><Ellipsis size={18} /></IconButton>
        </BrowserToolbar>
        <Bookmarks>
          {bookmarks.map((b, i) => (
            <Bookmark key={i} href="#" $w={b.w}>{b.icon}{b.label && <span>{b.label}</span>}</Bookmark>
          ))}
          <Push />
          <IconButton $w={42} aria-label="More bookmarks"><ChevronRight size={18} strokeWidth={1.500} /></IconButton>
        </Bookmarks>
        <Viewport>
          <Page>
            <AdminBar>
              <AdminItem href="#" $w={37} aria-label="WordPress"><FaWordpress size={20} color="#a7aaad" /></AdminItem>
              <AdminItem href="#" $w={104}><FaTachometerAlt size={16} color="#a7aaad" />مستر فاکتور</AdminItem>
              <AdminItem href="#" $w={102}><FaPaintBrush size={17} color="#a7aaad" />Customize</AdminItem>
              <AdminItem href="#" $w={49}><WpRefreshIcon />3</AdminItem>
              <AdminItem href="#" $w={53} $dim><WpCommentIcon />0</AdminItem>
              <AdminItem href="#" $w={50} $dim><WpMailIcon />0</AdminItem>
              <AdminItem href="#" $w={65}><FaPlus size={15} color="#a7aaad" />New</AdminItem>
              <AdminItem href="#" $w={93}><FaPencilAlt size={15} color="#a7aaad" />Edit Page</AdminItem>
              <AdminItem href="#" $w={122}>WP Mail SMTP<AlertDot>!</AlertDot></AdminItem>
              <AdminItem href="#">WPForms<AlertDot>2</AlertDot></AdminItem>
              <Push />
              <AdminItem href="#" $w={141}>Howdy, rsedaaghi<AvatarPhoto /></AdminItem>
              <AdminItem href="#" aria-label="Search"><FaSearch size={16} color="#a7aaad" /></AdminItem>
            </AdminBar>
            <SiteHeader>
              <HeaderInner>
                <SiteLogo />
                <Menu>
                  <MenuLink href="#">صفحه اصلی</MenuLink>
                  <MenuLink href="#">نرم‌افزار</MenuLink>
                  <MenuLink href="#">تعرفه‌ها</MenuLink>
                  <MenuLink href="#">منابع آموزشی<Caret /></MenuLink>
                  <MenuLink href="#">تماس با ما</MenuLink>
                  <MenuLink href="#"><FaUser size={16} /><Latin>rsedaaghi</Latin><Caret /></MenuLink>
                </Menu>
              </HeaderInner>
            </SiteHeader>
            <Checkout>
              <Stack>
                <Card $h={104}>
                  <CardTitle>محصول انتخاب شده شما</CardTitle>
                  <Product><BsClockFill size={18} color="#000" />خرید ۱ ساله کد فعالسازی</Product>
                </Card>
                <Card $h={90}>
                  <CardTitle>انتخاب روش پرداخت</CardTitle>
                  <PayOption><Radio type="radio" name="gateway" defaultChecked />پرداخت اینترنتی</PayOption>
                </Card>
                <Card $h={183}>
                  <CardTitle>کد تخفیف دارید؟</CardTitle>
                  <Hint>کد تخفیفتان را وارد کنید تا روی قیمت اعمال شود.</Hint>
                  <VoucherRow>
                    <VoucherField>
                      <CircleAlert size={16} color="#dc3545" />
                      <input defaultValue="happymrfactor" aria-label="کد تخفیف" />
                    </VoucherField>
                    <PrimaryButton type="button" $bg="#5f9dfb">اعمال</PrimaryButton>
                  </VoucherRow>
                  <ErrorText>متاسفانه کد تخفیف شما صحیح نمی‌باشد</ErrorText>
                </Card>
              </Stack>
              <PriceCard $h={185}>
                <PriceRow><span>قیمت</span><Amount>80,000,000 ریال</Amount></PriceRow>
                <PriceRule />
                <PriceRow><span>مجموع</span><Amount>80,000,000 ریال</Amount></PriceRow>
                <PayBox><PrimaryButton $bg="#0099cc">پرداخت</PrimaryButton></PayBox>
              </PriceCard>
            </Checkout>
            <SiteFooter>
              <FooterInner>
                <h3>درباره ما</h3>
                <h3>نرم‌افزار</h3>
                <h3>منابع</h3>
                <SocialTitle>مستر فاکتور در شبکه‌های اجتماعی:</SocialTitle>
              </FooterInner>
            </SiteFooter>
          </Page>
          <Scrollbar>
            <Triangle />
            <Thumb />
            <Push />
            <Triangle $down />
          </Scrollbar>
        </Viewport>
      </BrowserMain>
      <Sidebar>
        <SideButton aria-label="Bing"><BingIcon /></SideButton>
        <SideButton aria-label="Search"><MagnifierIcon /></SideButton>
        <SideButton aria-label="Shopping"><TagIcon /></SideButton>
        <SideButton aria-label="Tools"><ToolboxIcon /></SideButton>
        <SideButton aria-label="Games"><GamesIcon /></SideButton>
        <SideButton aria-label="Microsoft 365"><OfficeIcon /></SideButton>
        <SideButton aria-label="Outlook"><OutlookIcon /></SideButton>
        <SideButton aria-label="Drop"><SendIcon /></SideButton>
        <SideButton aria-label="Customize"><Plus size={18} strokeWidth={1.300} /></SideButton>
        <Push />
        <SideRule />
        <SideButton aria-label="Hide sidebar"><PanelRight size={17} strokeWidth={1.500} /></SideButton>
        <SideButton aria-label="Settings"><Settings size={18} strokeWidth={1.500} /></SideButton>
      </Sidebar>
    </BrowserBody>
  </Browser>
);

export default function App() {
  return (
    <Desktop>
      <GlobalStyle />
      <Screen $ratio="16 / 9">
        <ExplorerWindow />
        <Taskbar primary end={20} bg="linear-gradient(90deg, #241c2e 0%, #221d30 15%, #251b36 24%, #311a38 35%, #33261f 48%, #34251c 54%, #481318 66%, #4a1c12 80%, #301a1e 100%)" />
      </Screen>
      <Screen $ratio="16 / 10">
        <BrowserWindow />
        <Taskbar end={23} bg="linear-gradient(90deg, #241c30 0%, #251b36 36%, #3a1a28 48%, #46141a 66%, #3d1913 84%, #30191d 100%)" />
      </Screen>
    </Desktop>
  );
}
